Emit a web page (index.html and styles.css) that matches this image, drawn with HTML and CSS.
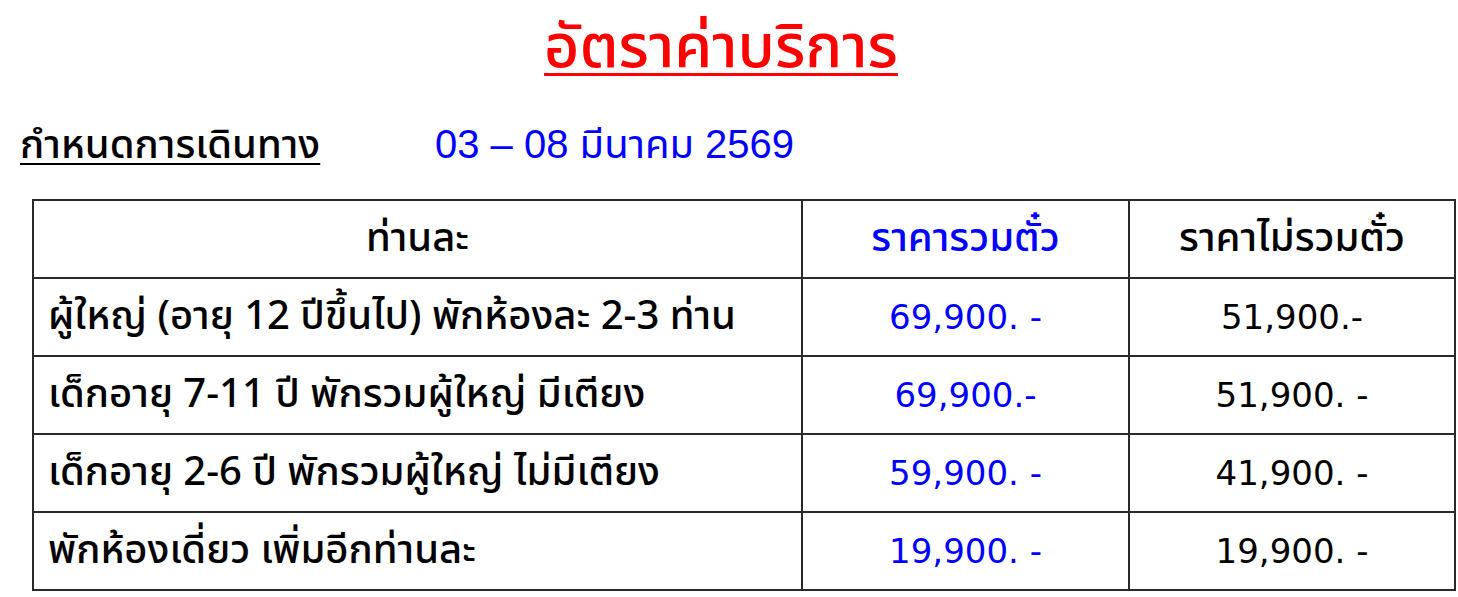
FILE: index.html
```html
<!DOCTYPE html>
<html lang="th">
<head>
<meta charset="utf-8">
<link rel="stylesheet" href="styles.css">
</head>
<body>
<div class="page">
  <h1 class="title">อัตราค่าบริการ</h1>
  <div class="schedule">
    <span class="label">กำหนดการเดินทาง</span>
    <span class="dates">03 – 08 มีนาคม 2569</span>
  </div>
  <table class="prices">
    <colgroup>
      <col class="c1"><col class="c2"><col class="c3">
    </colgroup>
    <tr>
      <th>ท่านละ</th>
      <th class="blue">ราคารวมตั๋ว</th>
      <th>ราคาไม่รวมตั๋ว</th>
    </tr>
    <tr>
      <td class="desc">ผู้ใหญ่ (อายุ 12 ปีขึ้นไป) พักห้องละ 2-3 ท่าน</td>
      <td class="num blue">69,900. -</td>
      <td class="num">51,900.-</td>
    </tr>
    <tr>
      <td class="desc">เด็กอายุ 7-11 ปี พักรวมผู้ใหญ่ มีเตียง</td>
      <td class="num blue">69,900.-</td>
      <td class="num">51,900. -</td>
    </tr>
    <tr>
      <td class="desc">เด็กอายุ 2-6 ปี พักรวมผู้ใหญ่ ไม่มีเตียง</td>
      <td class="num blue">59,900. -</td>
      <td class="num">41,900. -</td>
    </tr>
    <tr>
      <td class="desc">พักห้องเดี่ยว เพิ่มอีกท่านละ</td>
      <td class="num blue">19,900. -</td>
      <td class="num">19,900. -</td>
    </tr>
  </table>
</div>
</body>
</html>
```
FILE: styles.css
```css
html, body {
  margin: 0;
  padding: 0;
  background: #ffffff;
}
body {
  font-family: "Noto Sans Thai", "Noto Sans", sans-serif;
  color: #000;
}
.page {
  width: 1458px;
  height: 597px;
  overflow: hidden;
}
.title {
  margin: 0;
  padding: 0 16px 0 0;
  text-align: center;
  color: #ff0000;
  font-size: 61px;
  font-weight: 500;
  line-height: 96px;
  height: 96px;
  text-decoration: underline;
  text-decoration-thickness: 3px;
  text-underline-offset: 6px;
}
.schedule {
  display: flex;
  align-items: baseline;
  padding: 0 0 0 20px;
  height: 96px;
  font-size: 40px;
  line-height: 96px;
}
.label {
  width: 415px;
  font-weight: 500;
  text-decoration: underline;
  text-decoration-thickness: 2px;
  text-underline-offset: 5px;
}
.dates {
  color: #0000ff;
  font-size: 40px;
  font-family: "Liberation Sans", "Noto Sans Thai", sans-serif;
}
.prices {
  margin: 7px 0 0 32px;
  border-collapse: collapse;
  width: 1422px;
  table-layout: fixed;
  font-size: 40px;
}
.c1 { width: 769px; }
.c2 { width: 327px; }
.c3 { width: 326px; }
.prices th, .prices td {
  border: 2px solid #2a2a2a;
  height: 76px;
  padding: 0 14px;
  font-weight: 500;
  text-align: center;
  vertical-align: middle;
  line-height: 1;
}
.prices td.desc {
  text-align: left;
}
.num {
  font-family: "DejaVu Sans", "Noto Sans Thai", sans-serif;
  font-size: 34px;
}
.prices td.num {
  font-weight: normal;
}
.blue {
  color: #0000ff;
}
```
